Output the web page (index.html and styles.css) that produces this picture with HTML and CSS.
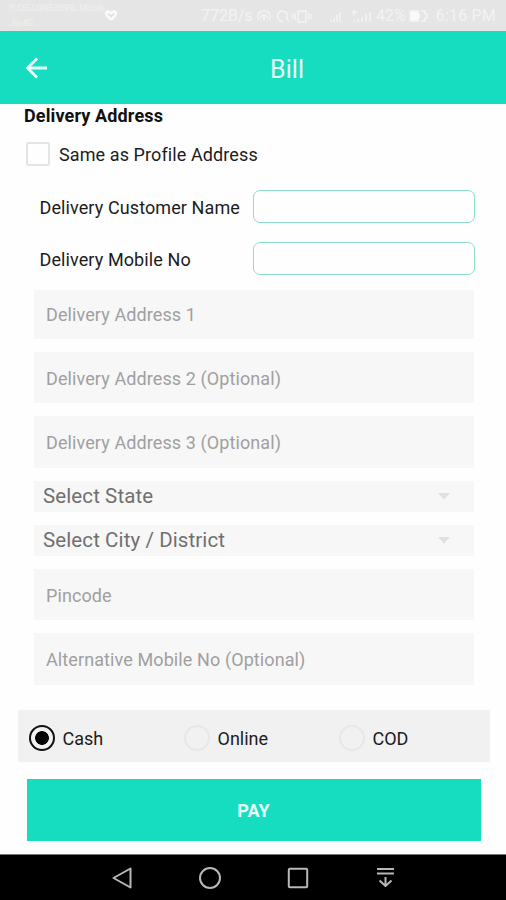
FILE: index.html
```html
<!DOCTYPE html>
<html lang="en">
<head>
<meta charset="utf-8">
<title>Bill</title>
<link rel="stylesheet" href="styles.css">
</head>
<body>
<div class="status">
  <div class="carrier"><span>!!! CELLONE/BSNL Mobile</span><span class="carrier-sub">Jio 4G</span></div>
  <svg class="heart" width="14" height="13" viewBox="0 0 14 13"><path d="M7 12C3 9 1 7 1 4.200C1 1 5 .4 7 3C9 .4 13 1 13 4.200C13 7 11 9 7 12Z"/><path class="beat" d="M3.500 5.500H5.500L7 7.500L10 4.500"/></svg>
  <span class="speed">772B/s</span>
  <svg class="indicators" width="60" height="16" viewBox="0 0 60 16"><path d="M2 12A6 6 0 1 1 12 12M4 10A3 3 0 1 1 10 10M7 8V13M30 10A5 5 0 1 0 26 13M29 10L32 13M41 3H49V14H41ZM38 5V12M52 5V12M35.500 6V11M54.500 6V11"/></svg>
  <svg class="signals" width="47" height="16" viewBox="0 0 47 16"><path d="M2 14V12M5 14V10M8 14V7M11 14V4M23 4H28M25 2V7M25 14V12M29 14V11M33 14V9M37 14V6M41 14V4"/></svg>
  <span class="percent">42%</span>
  <svg class="battery" width="20" height="12" viewBox="0 0 20 12"><path class="level" d="M1 1H9L11 6L9 11H1Z"/><path d="M12 1H16V4H18V8H16V11H12"/></svg>
  <span class="time">6:16 PM</span>
</div>
<header class="appbar">
  <svg class="back" width="22" height="22" viewBox="0 0 22 22"><path d="M21 11H2M11 1.500L1.500 11L11 20.500"/></svg>
  <h1>Bill</h1>
</header>
<main>
  <h2><span>Delivery Address</span></h2>
  <div class="same"><i class="checkbox"></i><span>Same as Profile Address</span></div>
  <div class="row"><span>Delivery Customer Name</span><i class="input"></i></div>
  <div class="row"><span>Delivery Mobile No</span><i class="input"></i></div>
  <div class="fields">
    <div class="field first"><span>Delivery Address 1</span></div>
    <div class="field"><span>Delivery Address 2 (Optional)</span></div>
    <div class="field"><span>Delivery Address 3 (Optional)</span></div>
    <div class="select"><span>Select State</span><svg width="12" height="7" viewBox="0 0 12 7"><path d="M0 0H12L6 6.500Z"/></svg></div>
    <div class="select"><span>Select City / District</span><svg width="12" height="7" viewBox="0 0 12 7"><path d="M0 0H12L6 6.500Z"/></svg></div>
    <div class="field"><span>Pincode</span></div>
    <div class="field"><span>Alternative Mobile No (Optional)</span></div>
  </div>
  <div class="payment">
    <div class="option"><i class="radio checked"></i><span>Cash</span></div>
    <div class="option"><i class="radio"></i><span>Online</span></div>
    <div class="option"><i class="radio"></i><span>COD</span></div>
  </div>
  <div class="pay"><span>PAY</span></div>
</main>
<nav>
  <svg width="24" height="24" viewBox="0 0 24 24"><path d="M20.500 2.500V21.500L3.500 12Z"/></svg>
  <svg width="24" height="24" viewBox="0 0 24 24"><circle cx="12" cy="12" r="10"/></svg>
  <svg width="24" height="24" viewBox="0 0 24 24"><rect x="2.800" y="2.800" width="18.400" height="18.400" rx="1"/></svg>
  <svg width="24" height="24" viewBox="0 0 24 24"><path d="M3 3H20M3 7.500H20M11.500 11V20M5.500 14.500L11.500 20L17.500 14.500"/></svg>
</nav>
</body>
</html>
```

FILE: styles.css
```css
* { box-sizing: border-box; }
body {
  margin: 0;
  width: 506px;
  height: 900px;
  display: flex;
  flex-direction: column;
  background: #fefefe;
  color: #1c1c1c;
  font-family: Roboto, "Liberation Sans", sans-serif;
  font-size: 18px;
  letter-spacing: 0.1px;
  white-space: nowrap;
  overflow: hidden;
}
svg { flex: none; fill: none; }
.status {
  height: 31px;
  flex: none;
  display: flex;
  align-items: center;
  padding: 0 10px 0 9px;
  background: #e6e5e5;
  color: #f3f3f3;
  font-size: 16px;
  letter-spacing: 0;
}
.status path { stroke: #f3f3f3; stroke-width: 1.5; }
.carrier {
  width: 95px;
  display: flex;
  flex-direction: column;
  font-size: 9px;
  line-height: 15px;
  color: #efefef;
  letter-spacing: -0.3px;
}
.carrier-sub { color: #eef1e8; }
.status .heart path { fill: #fafafa; stroke: none; }
.status .heart .beat { fill: none; stroke: #dedede; }
.speed { margin-left: 83px; width: 56px; }
.indicators { margin-right: 12px; }
.percent { width: 33px; }
.status .battery .level { fill: #fafafa; }
.time { margin-left: auto; letter-spacing: 0.2px; }
.appbar {
  height: 72.5px;
  flex: none;
  display: flex;
  align-items: center;
  padding: 2px 0 0 26px;
  background: #16dcc0;
  color: #e9fffa;
}
.back path { stroke: #e9fffa; stroke-width: 2.8; }
h1 {
  margin: 2px 0 0 222px;
  font-size: 25px;
  font-weight: 400;
}
main { flex: 1; }
h2 {
  margin: 1.5px 0 0 24px;
  height: 22px;
  line-height: 22px;
  font-size: 18px;
  font-weight: 700;
  letter-spacing: 0.13px;
  color: #111;
}
.same {
  display: flex;
  align-items: center;
  gap: 9px;
  margin: 15px 0 0 26px;
  height: 24px;
}
.checkbox {
  width: 24px;
  height: 24px;
  border: 2px solid #e4e4e4;
  border-radius: 2px;
}
.row {
  display: flex;
  align-items: center;
  justify-content: space-between;
  height: 33px;
  margin: 18.5px 31px 0 39.5px;
}
.row span { padding-top: 2px; }
.same + .row { margin-top: 24px; }
.input {
  width: 222px;
  height: 33px;
  border: 1.5px solid #89dfca;
  border-radius: 7px;
}
.fields {
  display: flex;
  flex-direction: column;
  gap: 13px;
  margin: 15px 32px 0 34px;
}
.field, .select {
  display: flex;
  align-items: center;
  background: #f7f7f7;
}
.field {
  height: 51.5px;
  padding: 2px 0 0 12px;
  color: #a0a0a0;
}
.field.first { height: 49px; padding-top: 1px; }
.select {
  height: 31px;
  justify-content: space-between;
  padding: 0 24px 0 9px;
  font-size: 20.5px;
  color: #707070;
}
.select path { fill: #e0e0e0; }
.payment {
  display: grid;
  grid-template-columns: 155px 155px 1fr;
  align-items: center;
  height: 52px;
  margin: 25.5px 16px 0 18px;
  padding: 4px 0 0 11px;
  background: #f1f1f1;
  letter-spacing: 0;
}
.option { display: flex; align-items: center; gap: 7.5px; }
.option span { padding-top: 1px; }
.radio {
  width: 26px;
  height: 26px;
  border: 2px solid #e7e7e7;
  border-radius: 50%;
}
.radio.checked {
  border: 2.5px solid #111;
  background: radial-gradient(circle, #000 6.5px, transparent 7.2px);
}
.pay {
  display: flex;
  align-items: center;
  justify-content: center;
  height: 62px;
  margin: 17px 25.5px 0 26.5px;
  padding-top: 1px;
  background: #16dcc0;
  color: #e9fffa;
  font-weight: 700;
}
nav {
  height: 46px;
  flex: none;
  display: flex;
  align-items: center;
  gap: 64px;
  padding: 0 0 0 110px;
  border-top: 1px solid #777;
  background: #000;
}
nav svg { stroke: #b8b8b8; stroke-width: 2; stroke-linejoin: round; }
```
